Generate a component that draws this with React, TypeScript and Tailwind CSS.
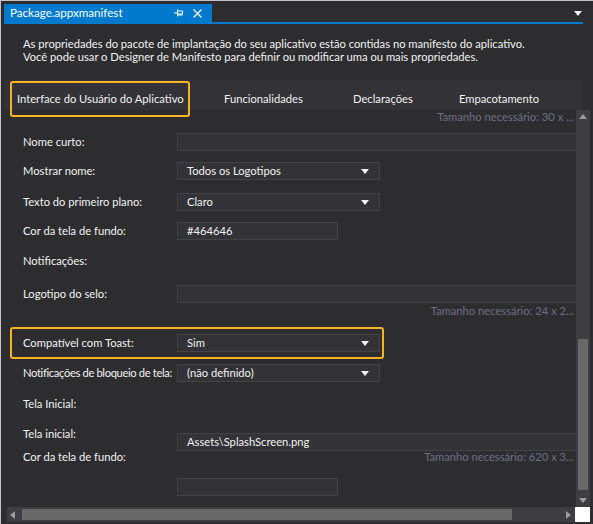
import React from "react";

const font = { fontFamily: "Lato, 'Open Sans', sans-serif" };

function Caret() {
  return (
    <svg width="8" height="5" viewBox="0 0 8 5" className="shrink-0">
      <path d="M0 0 H8 L4 5 Z" fill="#f1f1f1" />
    </svg>
  );
}

function Select({ value }: { value: string }) {
  return (
    <div className="flex h-[18px] w-[203px] items-center justify-between border border-[#434346] bg-[#333337] pl-[9px] pr-[10px] text-[11.2px] text-[#f1f1f1]">
      <span>{value}</span>
      <Caret />
    </div>
  );
}

function TextBox({ value, wide }: { value?: string; wide?: boolean }) {
  return (
    <div
      className={
        "flex h-[18px] items-center border border-[#434346] bg-[#333337] pl-[9px] text-[11.2px] text-[#f1f1f1] " +
        (wide ? "flex-1 border-r-0" : "w-[161px]")
      }
    >
      {value}
    </div>
  );
}

function Row({
  label,
  className,
  labelClass = "",
  children,
}: {
  label: string;
  className: string;
  labelClass?: string;
  children?: React.ReactNode;
}) {
  return (
    <div className={"flex h-[18px] items-center " + className}>
      <span className={"w-[173px] shrink-0 whitespace-nowrap pl-[19px] text-[11.2px] text-[#f1f1f1] " + labelClass}>
        {label}
      </span>
      {children}
    </div>
  );
}

function Hint({ text, className }: { text: string; className: string }) {
  return (
    <div className={"flex h-[14px] items-center justify-end pr-[2px] text-[11.2px] text-[#6d6d85] " + className}>
      {text}
    </div>
  );
}

export default function App() {
  return (
    <div
      style={font}
      className="relative h-[524px] w-[593px] overflow-hidden border-l border-t border-[#c4c4c4] bg-[#2d2d30] pb-[2px] pl-[3px] pr-[3px] pt-[3px]"
    >
      {/* document tab strip */}
      <div className="flex h-[18px] items-center">
        <div className="flex h-[18px] w-[208px] items-center bg-[#007acc] pl-[6px] pr-[10px] text-[11.6px] text-white">
          <span className="flex-1">Package.appxmanifest</span>
          <svg width="9" height="8" viewBox="0 0 9 8" className="mr-[10px]">
            <path d="M0 4 H3 M3.5 0.5 V7.5 M3.5 2 H8.5 V6 H3.5 M3.5 5 H8.5" stroke="#fff" strokeWidth="1" fill="none" />
          </svg>
          <svg width="9" height="9" viewBox="0 0 9 9">
            <path d="M0.5 0.5 L8.5 8.5 M8.5 0.5 L0.5 8.5" stroke="#fff" strokeWidth="1.3" />
          </svg>
        </div>
        <div className="flex flex-1 justify-end pr-[8px]">
          <svg width="8" height="5" viewBox="0 0 8 5">
            <path d="M0 0 H8 L4 5 Z" fill="#f1f1f1" />
          </svg>
        </div>
      </div>
      <div className="h-[2px] w-[579px] bg-[#007acc]" />

      {/* description */}
      <div className="h-[56px] pl-[19px] pt-[13px] text-[11.2px] leading-[13px] text-[#f1f1f1]">
        <p>As propriedades do pacote de implantação do seu aplicativo estão contidas no manifesto do aplicativo.</p>
        <p>Você pode usar o Designer de Manifesto para definir ou modificar uma ou mais propriedades.</p>
      </div>

      {/* section tabs */}
      <div className="flex h-[30px] w-[579px] bg-[#333337] pl-[13px] pt-[11px] text-[11.2px] leading-[16px] text-[#f1f1f1]">
        <span className="w-[207px]">Interface do Usuário do Aplicativo</span>
        <span className="w-[129px]">Funcionalidades</span>
        <span className="w-[106px]">Declarações</span>
        <span>Empacotamento</span>
      </div>

      {/* scrollable form */}
      <div className="flex h-[397px]">
        <div className="h-full w-[572px] overflow-hidden">
          <Hint text="Tamanho necessário: 30 x ..." className="" />
          <Row label="Nome curto:" className="mt-[9px]">
            <TextBox wide />
          </Row>
          <Row label="Mostrar nome:" className="mt-[11px]">
            <Select value="Todos os Logotipos" />
          </Row>
          <Row label="Texto do primeiro plano:" className="mt-[13px]">
            <Select value="Claro" />
          </Row>
          <Row label="Cor da tela de fundo:" className="mt-[11px]">
            <TextBox value="#464646" />
          </Row>
          <Row label="Notificações:" className="mt-[12px]" />
          <Row label="Logotipo do selo:" className="mt-[15px]">
            <TextBox wide />
          </Row>
          <Hint text="Tamanho necessário: 24 x 2..." className="mt-[1px]" />
          <Row label="Compatível com Toast:" className="mt-[16px]">
            <Select value="Sim" />
          </Row>
          <Row
            label="Notificações de bloqueio de tela:"
            className="mt-[12px]"
            labelClass="tracking-[-0.35px]"
          >
            <Select value="(não definido)" />
          </Row>
          <Row label="Tela Inicial:" className="mt-[13px]" />
          <div className="mt-[12px] flex h-[26px] items-start">
            <span className="flex h-[18px] w-[173px] shrink-0 items-center pl-[19px] text-[11.2px] text-[#f1f1f1]">
              Tela inicial:
            </span>
            <div className="mt-[8px] flex flex-1">
              <TextBox value="Assets\SplashScreen.png" wide />
            </div>
          </div>
          <div className="flex h-[12px] items-center justify-between text-[11.2px]">
            <span className="pl-[19px] text-[#f1f1f1]">Cor da tela de fundo:</span>
            <span className="pr-[2px] text-[#6d6d85]">Tamanho necessário: 620 x 3...</span>
          </div>
          <div className="mt-[15px] flex pl-[173px]">
            <TextBox />
          </div>
        </div>

        {/* vertical scrollbar */}
        <div className="flex h-full w-[14px] flex-col items-center bg-[#3e3e42]">
          <svg width="8" height="5" viewBox="0 0 8 5" className="mt-[4px]">
            <path d="M0 5 H8 L4 0 Z" fill="#9a9aa6" />
          </svg>
          <div className="mt-[220px] h-[151px] w-[10px] bg-[#686868]" />
          <svg width="8" height="5" viewBox="0 0 8 5" className="mt-[8px]">
            <path d="M0 0 H8 L4 5 Z" fill="#9a9aa6" />
          </svg>
        </div>
      </div>

      {/* horizontal scrollbar */}
      <div className="flex h-[15px]">
        <div className="ml-[3px] flex w-[568px] items-center bg-[#3e3e42]">
          <svg width="5" height="8" viewBox="0 0 5 8" className="ml-[3px]">
            <path d="M5 0 V8 L0 4 Z" fill="#9a9aa6" />
          </svg>
          <div className="ml-[7px] h-[11px] w-[490px] bg-[#686868]" />
          <svg width="5" height="8" viewBox="0 0 5 8" className="ml-[54px]">
            <path d="M0 0 V8 L5 4 Z" fill="#9a9aa6" />
          </svg>
        </div>
        <div className="h-[15px] w-[15px] bg-white" />
      </div>

      {/* highlight annotations */}
      <div className="pointer-events-none absolute left-[9px] top-[80px] h-[36px] w-[180px] rounded-[3px] border-2 border-[#f6b325]" />
      <div className="pointer-events-none absolute left-[9px] top-[326px] h-[32px] w-[374px] rounded-[3px] border-2 border-[#f6b325]" />
    </div>
  );
}
